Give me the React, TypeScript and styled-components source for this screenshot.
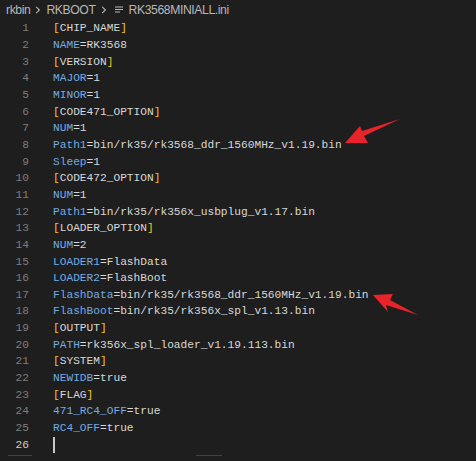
import styled, { createGlobalStyle } from "styled-components";

type Token = { text: string; kind: "key" | "value" | "bracket" | "section" };

const GlobalStyle = createGlobalStyle`
  html, body {
    margin: 0;
    padding: 0;
    background: #1e1e1e;
  }
`;

const Window = styled.div`
  position: relative;
  width: 476px;
  height: 461px;
  background: #1e1e1e;
  overflow: hidden;
`;

const Breadcrumbs = styled.div`
  display: flex;
  align-items: center;
  gap: 2px;
  height: 20px;
  padding-left: 6px;
  font-family: "Liberation Sans", Arial, sans-serif;
  font-size: 12.2px;
  color: #b8b8b8;
`;

const Crumb = styled.span`
  line-height: 20px;
  letter-spacing: -0.4px;
`;

const Chevron = styled.svg`
  width: 10px;
  height: 10px;
  margin: 0 1px;
`;

const FileIcon = styled.svg`
  width: 12px;
  height: 12px;
  margin: 0 2px 0 1px;
`;

const Editor = styled.div`
  display: flex;
  flex-direction: column;
  font-family: "Liberation Mono", "DejaVu Sans Mono", monospace;
  font-size: 11.2px;
`;

const Row = styled.div`
  display: flex;
  align-items: center;
  height: 16.66px;
`;

const LineNo = styled.span<{ $active?: boolean }>`
  width: 29px;
  flex: none;
  text-align: right;
  color: ${(p) => (p.$active ? "#cccccc" : "#7d7d7d")};
`;

const Code = styled.span`
  margin-left: 24px;
  white-space: pre;
  display: flex;
  align-items: center;
`;

const colors = {
  key: "#74abe2",
  value: "#d8d8d8",
  bracket: "#f2c418",
  section: "#d8d8d8",
};

const Tok = styled.span<{ $kind: Token["kind"] }>`
  color: ${(p) => colors[p.$kind]};
`;

const Caret = styled.span`
  display: inline-block;
  width: 1.5px;
  height: 16px;
  background: #c8c8c8;
`;

const Overlay = styled.svg`
  position: absolute;
  left: 0;
  top: 0;
  pointer-events: none;
`;

const Underline = styled.div`
  position: absolute;
  bottom: 5px;
  height: 1px;
  background: #24476e;
`;

const lines: string[] = [
  "[CHIP_NAME]",
  "NAME=RK3568",
  "[VERSION]",
  "MAJOR=1",
  "MINOR=1",
  "[CODE471_OPTION]",
  "NUM=1",
  "Path1=bin/rk35/rk3568_ddr_1560MHz_v1.19.bin",
  "Sleep=1",
  "[CODE472_OPTION]",
  "NUM=1",
  "Path1=bin/rk35/rk356x_usbplug_v1.17.bin",
  "[LOADER_OPTION]",
  "NUM=2",
  "LOADER1=FlashData",
  "LOADER2=FlashBoot",
  "FlashData=bin/rk35/rk3568_ddr_1560MHz_v1.19.bin",
  "FlashBoot=bin/rk35/rk356x_spl_v1.13.bin",
  "[OUTPUT]",
  "PATH=rk356x_spl_loader_v1.19.113.bin",
  "[SYSTEM]",
  "NEWIDB=true",
  "[FLAG]",
  "471_RC4_OFF=true",
  "RC4_OFF=true",
  "",
];

const tokenize = (line: string): Token[] => {
  if (line.startsWith("[")) {
    return [
      { text: "[", kind: "bracket" },
      { text: line.slice(1, -1), kind: "section" },
      { text: "]", kind: "bracket" },
    ];
  }
  const i = line.indexOf("=");
  if (i < 0) return [{ text: line, kind: "value" }];
  return [
    { text: line.slice(0, i), kind: "key" },
    { text: line.slice(i), kind: "value" },
  ];
};

const ChevronIcon = () => (
  <Chevron viewBox="0 0 10 10">
    <path d="M3.2 1.8 L6.4 5 L3.2 8.2" fill="none" stroke="#b8b8b8" strokeWidth="1.1" />
  </Chevron>
);

export default function App() {
  return (
    <>
      <GlobalStyle />
      <Window>
        <Breadcrumbs>
          <Crumb>rkbin</Crumb>
          <ChevronIcon />
          <Crumb>RKBOOT</Crumb>
          <ChevronIcon />
          <FileIcon viewBox="0 0 12 12">
            <path d="M2 3h8M2 5.5h8M2 8h5" stroke="#b8b8b8" strokeWidth="1.1" />
          </FileIcon>
          <Crumb>RK3568MINIALL.ini</Crumb>
        </Breadcrumbs>
        <Editor>
          {lines.map((line, idx) => (
            <Row key={idx}>
              <LineNo $active={idx === lines.length - 1}>{idx + 1}</LineNo>
              <Code>
                {line === "" ? (
                  <Caret />
                ) : (
                  tokenize(line).map((t, j) => (
                    <Tok key={j} $kind={t.kind}>
                      {t.text}
                    </Tok>
                  ))
                )}
              </Code>
            </Row>
          ))}
        </Editor>
        <Underline style={{ left: 8, width: 24 }} />
        <Underline style={{ left: 196, width: 26 }} />
        <Overlay width="476" height="461" viewBox="0 0 476 461">
          <path d="M345 143 L360 126 L362 131 L400 119 L364 136 L368 143 Z" fill="#e8232a" />
          <path d="M373 295 L393 294 L390 300 L418 315 L386 305 L388 312 Z" fill="#e8232a" />
        </Overlay>
      </Window>
    </>
  );
}
